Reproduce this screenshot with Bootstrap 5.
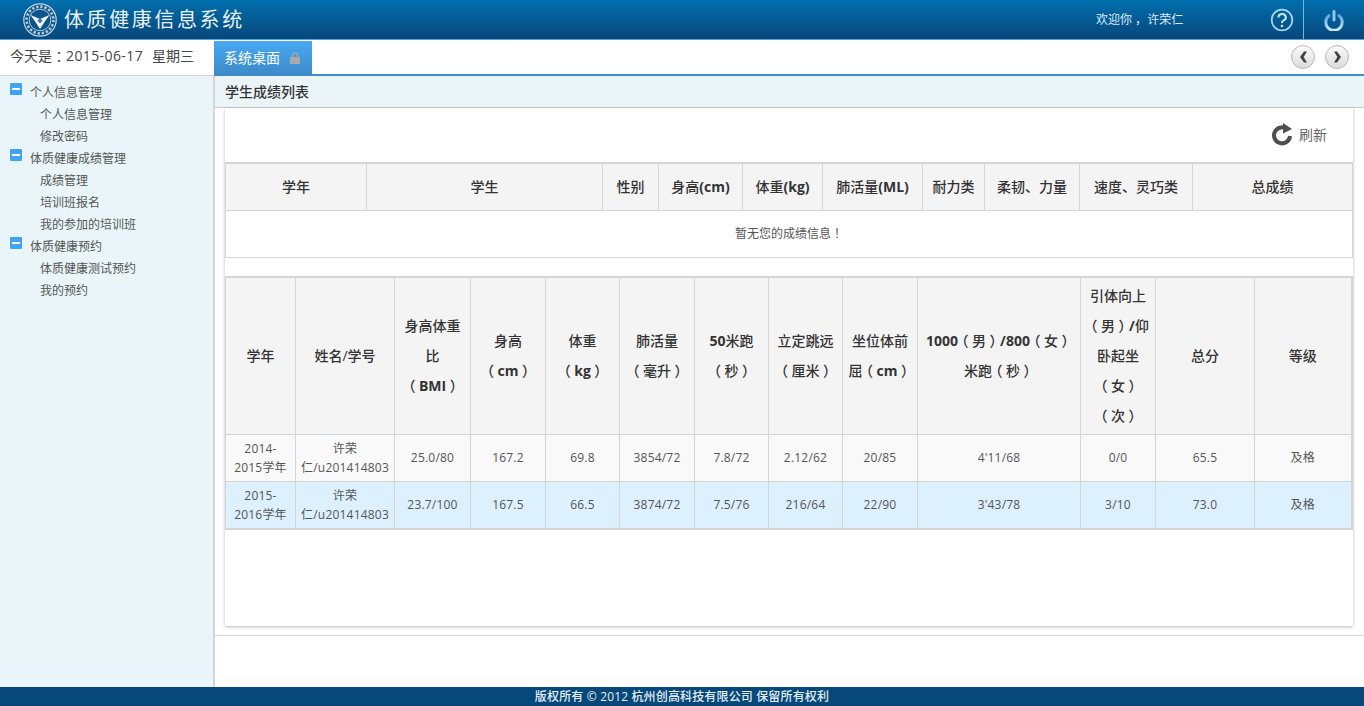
<!DOCTYPE html>
<html lang="zh-CN">
<head>
  <meta charset="UTF-8">
  <meta name="viewport" content="width=device-width, initial-scale=1.0">
  <title>体质健康信息系统</title>
  <link href="https://cdn.jsdelivr.net/npm/bootstrap@5.3.0/dist/css/bootstrap.min.css" rel="stylesheet">
  <style>
    html, body { height: 100%; }
    body { font-family: "Open Sans", "Noto Sans CJK SC", sans-serif; font-size: 12px; color: #555; overflow: hidden; background: #fff; }
    .page-wrap { height: 706px; }
    .body-row { min-height: 0; }
    /* full-width punctuation sits centred in the reference font */
    .pn { display: inline-block; font-feature-settings: "halt"; margin: 0 .25em; }
    .top-head { height: 40px; background: linear-gradient(#006fae, #07477a); border-bottom: 1px solid #5a9fdc; color: #dfeaf2; }
    .sys-title { font-size: 20px; letter-spacing: 2.6px; line-height: 1; color: #e8f1f6; margin-left: 7px; }
    .head-logo { margin-left: 23px; }
    .welcome { font-size: 12px; width: 175px; color: #dcebf5; padding-top: 1px; }
    .help-box { width: 32px; }
    .help-box svg { margin-left: -1px; }
    .power-box { width: 61px; height: 39px; border-left: 1px solid #7fb3dc; }
    .power-box svg { margin-top: 2px; }
    .tab-row { height: 36px; }
    .today { width: 214px; padding-left: 10px; font-size: 14px; color: #444; line-height: 32px; background: #fff; white-space: nowrap; border-bottom: 1px solid #d5d5d5; }
    .today-date { letter-spacing: .4px; margin-right: 9px; }
    .tab-strip { border-bottom: 2px solid #3d8dcc; }
    .sys-tab { width: 98px; height: 33px; margin-top: 1px; background: linear-gradient(#47a9f3, #3d8bc9); color: #fff; font-size: 14px; padding-left: 10px; }
    .sys-tab svg { margin-left: 10px; }
    .round-btn { width: 24px; height: 24px; border-radius: 50%; border: 1px solid #b9b9b9; background: linear-gradient(#fafafa, #dcdcdc); padding: 0; }
    .round-wrap { gap: 10px; padding-right: 15px; margin-top: -1px; }
    .side-menu { width: 215px; background: #e9f5f8; border-right: 2px solid #d5d5d5; padding-top: 6px; }
    .side-menu a { display: block; height: 22px; line-height: 22px; color: #555; text-decoration: none; font-size: 12px; white-space: nowrap; }
    .menu-group { padding-left: 10px; }
    .menu-group span { margin-left: 8px; }
    .menu-item { padding-left: 40px; }
    .minus-box { display: inline-block; width: 12px; height: 12px; background: #40a4f2; border-radius: 1px; vertical-align: 2px; position: relative; }
    .minus-box::after { content: ""; position: absolute; left: 2px; right: 2px; top: 5px; height: 2px; background: #fff; }
    .work-area { min-width: 0; }
    .title-bar { height: 32px; background: #ebf5f8; border-bottom: 1px solid #c9c9c9; padding-left: 10px; font-size: 14px; font-weight: 500; color: #333; line-height: 31px; }
    .list-panel { margin: 0 11px 0 10px; height: 518px; background: #fff; box-shadow: 0 1px 3px rgba(0,0,0,.28); }
    .refresh-row { height: 54px; padding: 0 26px 2px 0; font-size: 14px; color: #666; gap: 6px; }
    .score-tbl { table-layout: fixed; margin: 0; border-collapse: collapse; border-top: 2px solid #d5d5d5; }
    .score-tbl th, .score-tbl td { border: 1px solid #d5d5d5; vertical-align: middle; text-align: center; padding: 3px 6px; color: #555; background: #fff; box-shadow: none; }
    .score-tbl th { background: #f4f4f4; color: #333; font-size: 14px; font-weight: 500; }
    .tbl-one { width: 1127px; }
    .tbl-one th, .tbl-one td { height: 47px; line-height: 20px; }
    .tbl-two { width: 1126px; margin-top: 18px; border-right: 2px solid #d5d5d5; border-bottom: 2px solid #d5d5d5; }
    .tbl-two th { line-height: 30px; padding: 3px 5px; }
    .tbl-two td { line-height: 19px; padding: 4px 2px; height: 47px; letter-spacing: .2px; }
    .tbl-two .row-even td { background: #f9f9f9; }
    .tbl-two .row-hi td { background: #ddf0fe; }
    .tbl-one col:nth-child(1) { width: 141px; }
    .tbl-one col:nth-child(2) { width: 236px; }
    .tbl-one col:nth-child(3) { width: 56px; }
    .tbl-one col:nth-child(4) { width: 84px; }
    .tbl-one col:nth-child(5) { width: 80px; }
    .tbl-one col:nth-child(6) { width: 100px; }
    .tbl-one col:nth-child(7) { width: 62px; }
    .tbl-one col:nth-child(8) { width: 95px; }
    .tbl-one col:nth-child(9) { width: 113px; }
    .tbl-one col:nth-child(10) { width: 160px; }
    .tbl-two col:nth-child(1) { width: 70px; }
    .tbl-two col:nth-child(2) { width: 99px; }
    .tbl-two col:nth-child(3) { width: 76px; }
    .tbl-two col:nth-child(4) { width: 75px; }
    .tbl-two col:nth-child(5) { width: 74px; }
    .tbl-two col:nth-child(6) { width: 75px; }
    .tbl-two col:nth-child(7) { width: 74px; }
    .tbl-two col:nth-child(8) { width: 74px; }
    .tbl-two col:nth-child(9) { width: 75px; }
    .tbl-two col:nth-child(10) { width: 163px; }
    .tbl-two col:nth-child(11) { width: 75px; }
    .tbl-two col:nth-child(12) { width: 99px; }
    .tbl-two col:nth-child(13) { width: 97px; }
    .rule-line { margin-top: 9px; border-top: 1px solid #d5d5d5; }
    .foot-bar { height: 19px; background: #07487a; color: #e6eef4; font-size: 12px; font-weight: 500; line-height: 19px; text-align: center; letter-spacing: .15px; }
  </style>
</head>
<body>
<div class="page-wrap d-flex flex-column">

  <header class="top-head d-flex align-items-center">
    <svg class="head-logo" width="34" height="34" viewBox="0 0 34 34" fill="none">
      <circle cx="17" cy="17" r="16.2" fill="#0c5589" stroke="#c3d5e2" stroke-width="1.2"/>
      <circle cx="17" cy="17" r="13.4" stroke="#dbe7ef" stroke-width="2.6" stroke-dasharray="2.4 1.8" opacity=".8"/>
      <circle cx="17" cy="17" r="10.8" stroke="#c3d5e2" stroke-width=".9"/>
      <path d="M7.5 12 L13.5 14.5 L17 16 L20.5 14.5 L26.5 12 L21.5 19 L17 26 L12.5 19 Z" fill="#f2f6f9"/>
      <path d="M14.5 17.5 L17 15 L19.5 17.5 L17 20.5 Z" fill="#3b78a3"/>
    </svg>
    <div class="sys-title">体质健康信息系统</div>
    <div class="welcome ms-auto">欢迎你<span class="pn">，</span> 许荣仁</div>
    <div class="help-box d-flex">
      <svg width="24" height="24" viewBox="0 0 24 24" fill="none">
        <circle cx="12" cy="12" r="10.3" stroke="#a9d3f0" stroke-width="1.7"/>
        <path d="M8.4 9.4 A3.7 3.4 0 1 1 13.4 12.6 Q12 13.3 12 15" stroke="#cfe6f6" stroke-width="2"/>
        <circle cx="12" cy="18" r="1.3" fill="#cfe6f6"/>
      </svg>
    </div>
    <div class="power-box d-flex align-items-center justify-content-center">
      <svg width="20" height="21" viewBox="0 0 20 21" fill="none">
        <defs><linearGradient id="powGrad" x1="0" y1="0" x2="0" y2="1"><stop offset="0" stop-color="#5aa9e0"/><stop offset="1" stop-color="#cbe7fa"/></linearGradient></defs>
        <path d="M5 5.6 A8.2 8.2 0 1 0 15 5.6" stroke="url(#powGrad)" stroke-width="3" stroke-linecap="round"/>
        <rect x="8.5" y="0" width="3" height="11.5" rx="1.4" fill="#8cc7ee"/>
      </svg>
    </div>
  </header>

  <div class="tab-row d-flex">
    <div class="today">今天是<span class="pn">：</span><span class="today-date">2015-06-17</span>星期三</div>
    <div class="tab-strip flex-grow-1 d-flex">
      <div class="sys-tab d-flex align-items-center">系统桌面
        <svg width="10" height="12" viewBox="0 0 10 12" fill="none">
          <path d="M2.5 5.5 V3.5 A2.5 2.5 0 0 1 7.5 3.5 V5.5" stroke="#a9a9a9" stroke-width="1.4"/>
          <rect y="5" width="10" height="7" fill="#a9a9a9"/>
        </svg>
      </div>
      <div class="round-wrap d-flex align-items-center ms-auto">
        <button class="round-btn d-flex align-items-center justify-content-center" type="button" aria-label="上一个">
          <svg width="9" height="12" viewBox="0 0 9 12"><polygon points="5,0.5 8,0.5 4.6,6 8,11.5 5,11.5 1,6" fill="#444"/></svg>
        </button>
        <button class="round-btn d-flex align-items-center justify-content-center" type="button" aria-label="下一个">
          <svg width="9" height="12" viewBox="0 0 9 12"><polygon points="4,0.5 1,0.5 4.4,6 1,11.5 4,11.5 8,6" fill="#444"/></svg>
        </button>
      </div>
    </div>
  </div>

  <div class="body-row d-flex flex-grow-1">
    <nav class="side-menu flex-shrink-0">
      <a class="menu-group" href="#"><i class="minus-box"></i><span>个人信息管理</span></a>
      <a class="menu-item" href="#">个人信息管理</a>
      <a class="menu-item" href="#">修改密码</a>
      <a class="menu-group" href="#"><i class="minus-box"></i><span>体质健康成绩管理</span></a>
      <a class="menu-item" href="#">成绩管理</a>
      <a class="menu-item" href="#">培训班报名</a>
      <a class="menu-item" href="#">我的参加的培训班</a>
      <a class="menu-group" href="#"><i class="minus-box"></i><span>体质健康预约</span></a>
      <a class="menu-item" href="#">体质健康测试预约</a>
      <a class="menu-item" href="#">我的预约</a>
    </nav>

    <main class="work-area flex-grow-1">
      <div class="title-bar">学生成绩列表</div>
      <div class="list-panel">
        <div class="refresh-row d-flex align-items-center justify-content-end">
          <svg width="22" height="24" viewBox="0 0 22 24" fill="none">
            <path d="M16.5 7.5 A8 8 0 1 0 19 14" stroke="#4f4f4f" stroke-width="4"/>
            <path d="M12 1 L21 7 L12 11.5 Z" fill="#4f4f4f"/>
          </svg>
          <span>刷新</span>
        </div>

        <table class="table score-tbl tbl-one">
          <colgroup><col><col><col><col><col><col><col><col><col><col></colgroup>
          <thead>
            <tr>
              <th>学年</th><th>学生</th><th>性别</th><th>身高<b>(cm)</b></th><th>体重<b>(kg)</b></th><th>肺活量<b>(ML)</b></th><th>耐力类</th><th>柔韧、力量</th><th>速度、灵巧类</th><th>总成绩</th>
            </tr>
          </thead>
          <tbody>
            <tr><td colspan="10">暂无您的成绩信息<span class="pn">！</span></td></tr>
          </tbody>
        </table>

        <table class="table score-tbl tbl-two">
          <colgroup><col><col><col><col><col><col><col><col><col><col><col><col><col></colgroup>
          <thead>
            <tr>
              <th>学年</th>
              <th>姓名/学号</th>
              <th>身高体重<br>比<br><span class="pn">（</span><b>BMI</b><span class="pn">）</span></th>
              <th>身高<br><span class="pn">（</span><b>cm</b><span class="pn">）</span></th>
              <th>体重<br><span class="pn">（</span><b>kg</b><span class="pn">）</span></th>
              <th>肺活量<br><span class="pn">（</span>毫升<span class="pn">）</span></th>
              <th><b>50</b>米跑<br><span class="pn">（</span>秒<span class="pn">）</span></th>
              <th>立定跳远<br><span class="pn">（</span>厘米<span class="pn">）</span></th>
              <th>坐位体前<br>屈<span class="pn">（</span><b>cm</b><span class="pn">）</span></th>
              <th><b>1000</b><span class="pn">（</span>男<span class="pn">）</span><b>/800</b><span class="pn">（</span>女<span class="pn">）</span><br>米跑<span class="pn">（</span>秒<span class="pn">）</span></th>
              <th>引体向上<br><span class="pn">（</span>男<span class="pn">）</span><b>/</b>仰<br>卧起坐<br><span class="pn">（</span>女<span class="pn">）</span><br><span class="pn">（</span>次<span class="pn">）</span></th>
              <th>总分</th>
              <th>等级</th>
            </tr>
          </thead>
          <tbody>
            <tr class="row-even">
              <td>2014-<br>2015学年</td><td>许荣<br>仁/u201414803</td><td>25.0/80</td><td>167.2</td><td>69.8</td><td>3854/72</td><td>7.8/72</td><td>2.12/62</td><td>20/85</td><td>4'11/68</td><td>0/0</td><td>65.5</td><td>及格</td>
            </tr>
            <tr class="row-hi">
              <td>2015-<br>2016学年</td><td>许荣<br>仁/u201414803</td><td>23.7/100</td><td>167.5</td><td>66.5</td><td>3874/72</td><td>7.5/76</td><td>216/64</td><td>22/90</td><td>3'43/78</td><td>3/10</td><td>73.0</td><td>及格</td>
            </tr>
          </tbody>
        </table>
      </div>
      <div class="rule-line"></div>
    </main>
  </div>

  <footer class="foot-bar">版权所有 © 2012 杭州创高科技有限公司 保留所有权利</footer>
</div>
<script src="https://cdn.jsdelivr.net/npm/bootstrap@5.3.0/dist/js/bootstrap.bundle.min.js"></script>
</body>
</html>
